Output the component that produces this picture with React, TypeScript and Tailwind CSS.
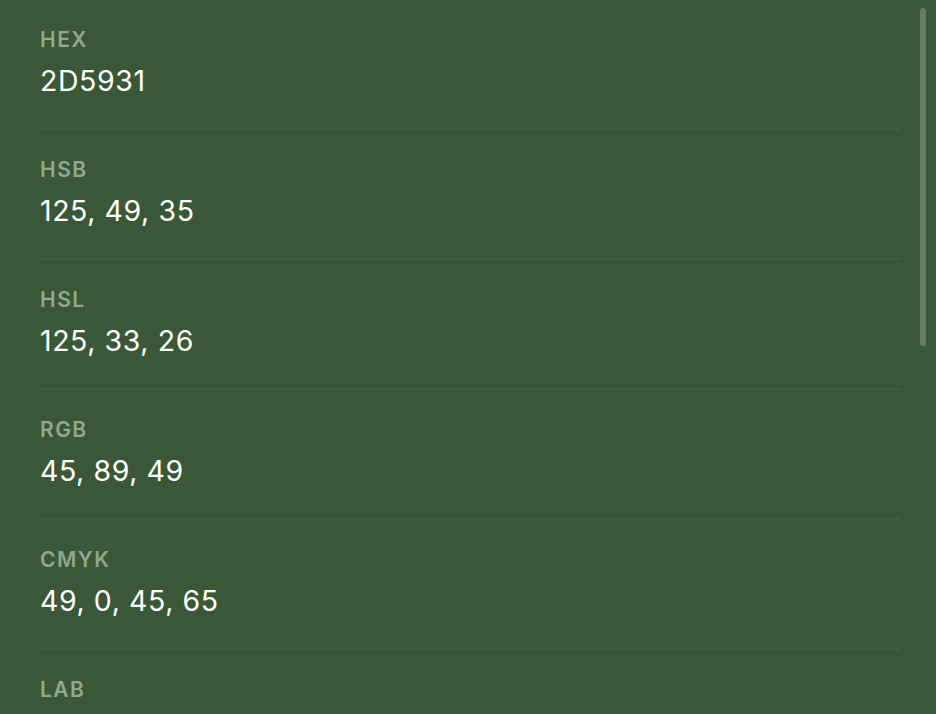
import React from "react";

const rows = [
  { label: "HEX", value: "2D5931" },
  { label: "HSB", value: "125, 49, 35" },
  { label: "HSL", value: "125, 33, 26" },
  { label: "RGB", value: "45, 89, 49" },
  { label: "CMYK", value: "49, 0, 45, 65" },
  { label: "LAB", value: "34, -26, 19" },
];

function App() {
  return (
    <div
      className="relative h-screen overflow-hidden bg-[#3a5837]"
      style={{ fontFamily: "Inter, 'Noto Sans', sans-serif" }}
    >
      <div className="pl-10 pr-9">
        {rows.map((row) => (
          <div key={row.label} className="pt-[28px] pb-[30px] border-b-2 border-[#42603f]">
            <div className="h-6 text-[21px] leading-6 font-semibold tracking-[0.07em] text-[#91a78e]">
              {row.label}
            </div>
            <div className="mt-3 h-[34px] text-[28.5px] leading-[34px] tracking-[0.02em] text-white">
              {row.value}
            </div>
          </div>
        ))}
      </div>
      {/* overlay scrollbar */}
      <div className="absolute right-[10px] top-2 w-[6px] h-[338px] rounded-full bg-[#647c61]" />
    </div>
  );
}

export default App;
